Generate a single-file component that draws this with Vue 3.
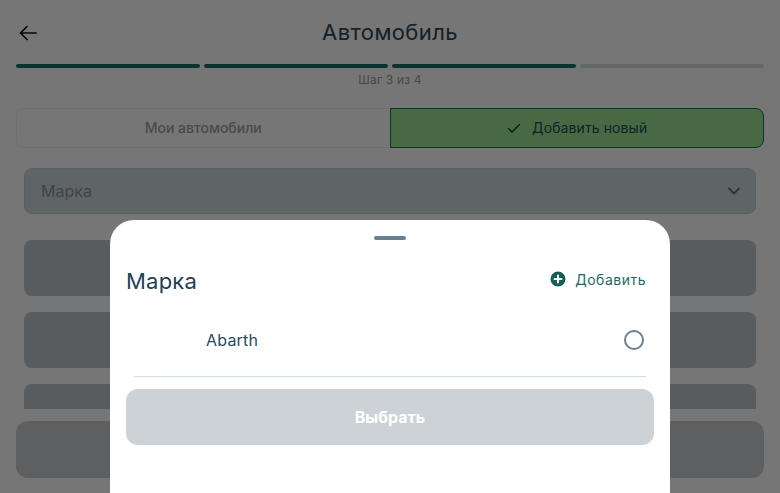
<template>
  <div class="page">
    <header class="header">
      <button class="back">
        <svg width="24" height="24" viewBox="0 0 24 24" fill="none" stroke="#111" stroke-width="1.700" stroke-linecap="round" stroke-linejoin="round">
          <path d="M20 12H5M11 5.500L4.500 12L11 18.500" />
        </svg>
      </button>
      <h1 class="title">Автомобиль</h1>
    </header>
    <div class="steps">
      <div v-for="n in 4" :key="n" class="step" :class="{ done: n <= 3 }"></div>
    </div>
    <div class="step-label">Шаг 3 из 4</div>
    <div class="tabs">
      <div class="tab">Мои автомобили</div>
      <div class="tab active">
        <svg width="16" height="16" viewBox="0 0 16 16" fill="none" stroke="#1c2a33" stroke-width="1.300" stroke-linecap="round" stroke-linejoin="round">
          <path d="M2.500 8.500L6 12L13.500 4.500" />
        </svg>
        Добавить новый
      </div>
    </div>
    <div class="content">
      <div class="select">
        <span>Марка</span>
        <svg width="14" height="14" viewBox="0 0 14 14" fill="none" stroke="#5d6a78" stroke-width="2" stroke-linecap="round" stroke-linejoin="round">
          <path d="M2 4.500L7 9.500L12 4.500" />
        </svg>
      </div>
      <div class="rows">
        <div v-for="n in 3" :key="n" class="row"></div>
      </div>
    </div>
    <div class="next"></div>

    <div class="overlay">
      <div class="sheet">
        <div class="handle"></div>
        <div class="sheet-head">
          <h2 class="sheet-title">Марка</h2>
          <button class="add">
            <svg width="16" height="16" viewBox="0 0 16 16">
              <circle cx="8" cy="8" r="7.500" fill="#155e55" />
              <path d="M8 4.500V11.500M4.500 8H11.500" stroke="#fff" stroke-width="2" stroke-linecap="round" />
            </svg>
            Добавить
          </button>
        </div>
        <div class="brand">
          <span>Abarth</span>
          <span class="radio"></span>
        </div>
        <button class="choose">Выбрать</button>
      </div>
    </div>
  </div>
</template>

<script setup>
</script>

<style>
html,
body {
  margin: 0;
  overflow: hidden;
}
</style>

<style scoped>
.page {
  position: relative;
  width: 100%;
  height: 100vh;
  overflow: hidden;
  background: #ececec;
  font-family: Inter, "Noto Sans", sans-serif;
  padding: 0 16px;
  box-sizing: border-box;
}

.header {
  position: relative;
  height: 64px;
  display: flex;
  align-items: center;
  justify-content: center;
}

.back {
  position: absolute;
  left: 0;
  top: 20px;
  width: 24px;
  height: 24px;
  padding: 1px 0 0;
  border: 0;
  background: none;
}

.title {
  margin: 0;
  font-size: 22px;
  font-weight: 400;
  letter-spacing: 0.4px;
  color: #2a4050;
}

.steps {
  display: flex;
  gap: 4px;
}

.step {
  flex: 1;
  height: 4px;
  border-radius: 2px;
  background: #c4d0d0;
}

.step.done {
  background: #17685f;
}

.step-label {
  margin-top: 4px;
  height: 15px;
  line-height: 15px;
  text-align: center;
  font-size: 12px;
  letter-spacing: 0.15px;
  color: #8a8f96;
}

.tabs {
  display: flex;
  height: 40px;
  margin-top: 21px;
}

.tab {
  flex: 1;
  box-sizing: border-box;
  display: flex;
  align-items: center;
  justify-content: center;
  gap: 10px;
  padding-bottom: 1px;
  font-size: 14px;
  border: 1px solid #dbe3e3;
  border-right: 0;
  border-radius: 8px 0 0 8px;
  font-weight: 500;
  color: #8f959c;
}

.tab.active {
  font-weight: 400;
  letter-spacing: 0.1px;
  color: #2a4050;
  background: #8ed488;
  border: 1px solid #17685f;
  border-radius: 0 8px 8px 0;
}

.content {
  padding: 20px 8px 0;
  height: 261px;
  box-sizing: border-box;
  overflow: hidden;
}

.select {
  box-sizing: border-box;
  height: 46px;
  display: flex;
  align-items: center;
  justify-content: space-between;
  padding: 0 14px 0 16px;
  background: #bfcacc;
  border: 1px solid #b4c0c4;
  border-radius: 8px;
  font-size: 16px;
  color: #7f888e;
}

.rows {
  margin-top: 26px;
  display: flex;
  flex-direction: column;
  gap: 16px;
}

.row {
  height: 56px;
  flex: none;
  border-radius: 8px;
  background: #b0b8be;
}

.next {
  height: 57px;
  margin-top: 12px;
  border-radius: 12px;
  background: #bcbec0;
}

.overlay {
  position: absolute;
  inset: 0;
  display: flex;
  align-items: flex-end;
  justify-content: center;
  background: rgba(0, 0, 0, 0.5);
}

.sheet {
  width: 560px;
  height: 273px;
  box-sizing: border-box;
  padding: 16px 16px 0;
  background: #fff;
  border-radius: 24px 24px 0 0;
}

.handle {
  width: 32px;
  height: 4px;
  margin: 0 auto;
  border-radius: 2px;
  background: #6b7f8c;
}

.sheet-head {
  display: flex;
  align-items: center;
  justify-content: space-between;
  margin-top: 24px;
  height: 34px;
}

.sheet-title {
  margin: 0;
  font-size: 22px;
  font-weight: 400;
  letter-spacing: 0.2px;
  color: #1f3f55;
}

.add {
  display: flex;
  align-items: center;
  gap: 9px;
  padding: 0;
  margin: -4px 8px 0 0;
  border: 0;
  background: none;
  font-family: inherit;
  font-size: 14px;
  letter-spacing: 0.5px;
  color: #1f6a60;
}

.brand {
  display: flex;
  align-items: center;
  justify-content: space-between;
  height: 79px;
  margin: 0 8px;
  padding: 5px 2px 0 72px;
  box-sizing: border-box;
  border-bottom: 1px solid #cfdedd;
  font-size: 16px;
  letter-spacing: 0.2px;
  color: #2a4a60;
}

.radio {
  width: 20px;
  height: 20px;
  box-sizing: border-box;
  border: 2px solid #6b7f8c;
  border-radius: 50%;
}

.choose {
  display: block;
  width: 100%;
  height: 56px;
  margin-top: 12px;
  border: 0;
  border-radius: 12px;
  background: #cdd2d6;
  color: #fff;
  font-family: inherit;
  font-size: 16px;
  font-weight: 700;
}
</style>
